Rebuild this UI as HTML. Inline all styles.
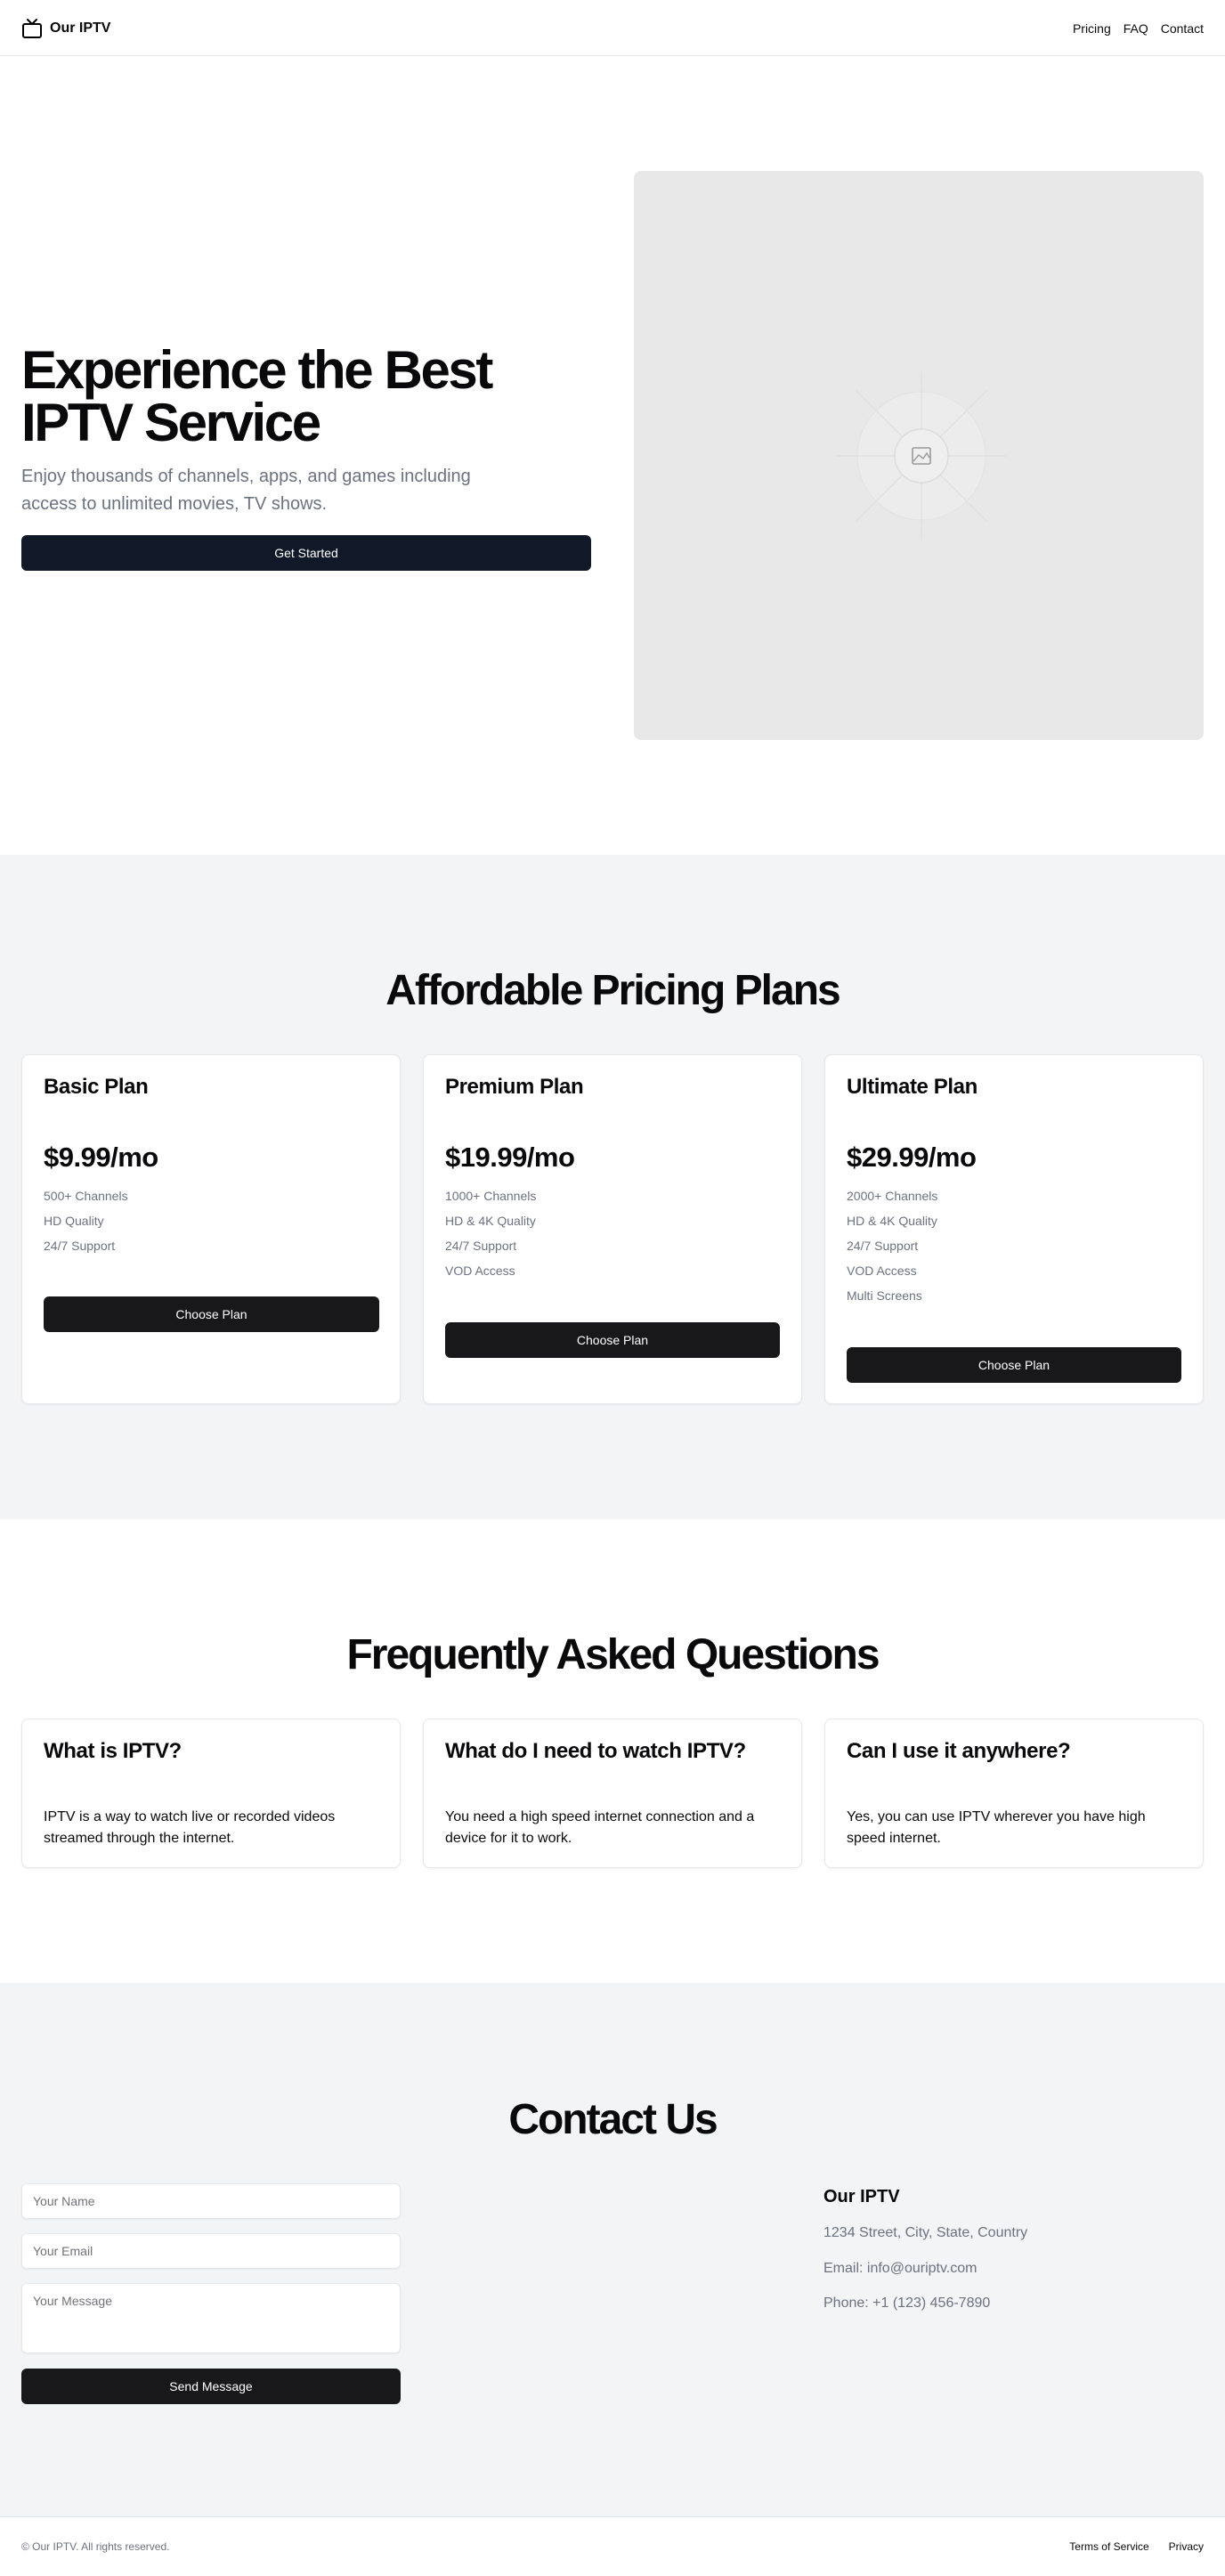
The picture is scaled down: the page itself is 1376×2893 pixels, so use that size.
<!DOCTYPE html>
<html><head><meta charset="utf-8"><style>
*{box-sizing:border-box;margin:0;padding:0}
body{width:1376px;height:2893px;font-family:"Liberation Sans",sans-serif;color:#09090b;background:#fff;position:relative;overflow:hidden}
.a{position:absolute}
header{position:absolute;left:0;top:0;width:1376px;height:63px;border-bottom:1px solid #e5e7eb}
.nav a{font-size:14px;font-weight:500;color:#09090b;text-decoration:none;margin-left:14px}
h1{font-size:60px;line-height:59px;font-weight:700;letter-spacing:-2.4px}
.h2{font-size:48px;font-weight:700;letter-spacing:-2px;width:1376px;text-align:center;left:0}
.card{background:#fff;border:1px solid #e5e7eb;border-radius:8px;box-shadow:0 1px 2px rgba(0,0,0,.06)}
.btn{background:#18181b;color:#fff;border-radius:6px;font-size:14px;font-weight:500;display:flex;align-items:center;justify-content:center}
.ct{font-size:24px;font-weight:600;letter-spacing:-.4px}
.pr{font-size:31px;font-weight:700;letter-spacing:-.5px}
.ft{font-size:14px;color:#6b7280;line-height:28px}
.inp{background:#fff;border:1px solid #e5e7eb;border-radius:6px;font-size:14px;color:#71717a;padding:11px 12px;box-shadow:0 1px 2px rgba(0,0,0,.05)}
.g{color:#6b7280;font-size:16px}
</style></head><body>
<header>
<svg class="a" style="left:24px;top:20px" width="24" height="24" viewBox="0 0 24 24" fill="none" stroke="#000" stroke-width="2" stroke-linecap="round" stroke-linejoin="round"><rect x="2" y="7" width="20" height="15" rx="2"/><polyline points="17 2 12 7 7 2"/></svg>
<div class="a" style="left:56px;top:23px;font-size:16px;font-weight:700">Our IPTV</div>
<div class="a nav" style="right:24px;top:24px"><a>Pricing</a><a>FAQ</a><a>Contact</a></div>
</header>

<h1 class="a" style="left:24px;top:386px">Experience the Best<br>IPTV Service</h1>
<div class="a" style="left:24px;top:520px;width:570px;font-size:20px;line-height:31px;color:#6b7280">Enjoy thousands of channels, apps, and games including access to unlimited movies, TV shows.</div>
<div class="a btn" style="left:24px;top:601px;width:640px;height:40px;background:#111827">Get Started</div>

<div class="a" style="left:712px;top:192px;width:640px;height:639px;background:#e8e8e8;border-radius:8px;overflow:hidden">
<svg width="640" height="639" viewBox="0 0 640 639"><g stroke="#dedede" stroke-width="1.2" fill="none">
<line x1="323" y1="225" x2="323" y2="415"/><line x1="228" y1="320" x2="418" y2="320"/>
<line x1="250" y1="247" x2="396" y2="393"/><line x1="396" y1="247" x2="250" y2="393"/></g>
<circle cx="323" cy="320" r="72" fill="#ececec" stroke="#e2e2e2"/>
<g stroke="#dedede" stroke-width="1.2"><line x1="323" y1="248" x2="323" y2="392"/><line x1="251" y1="320" x2="395" y2="320"/><line x1="272" y1="269" x2="374" y2="371"/><line x1="374" y1="269" x2="272" y2="371"/></g>
<circle cx="323" cy="320" r="30" fill="#efefef" stroke="#dcdcdc" stroke-width="1.5"/>
<rect x="313" y="311" width="20" height="18" rx="1.5" fill="none" stroke="#999" stroke-width="1.6"/>
<polyline points="314,326 320,319 325,323 329,317 332,322" fill="none" stroke="#999" stroke-width="1.4"/>
</svg></div>

<div class="a" style="left:0;top:960px;width:1376px;height:746px;background:#f3f4f6"></div>
<div class="a h2" style="top:1085px">Affordable Pricing Plans</div>

<div class="a card" style="left:24px;top:1184px;width:426px;height:393px"></div>
<div class="a ct" style="left:49px;top:1207px">Basic Plan</div>
<div class="a pr" style="left:49px;top:1282px">$9.99/mo</div>
<div class="a ft" style="left:49px;top:1329px">500+ Channels<br>HD Quality<br>24/7 Support</div>
<div class="a btn" style="left:49px;top:1456px;width:377px;height:40px">Choose Plan</div>

<div class="a card" style="left:475px;top:1184px;width:426px;height:393px"></div>
<div class="a ct" style="left:500px;top:1207px">Premium Plan</div>
<div class="a pr" style="left:500px;top:1282px">$19.99/mo</div>
<div class="a ft" style="left:500px;top:1329px">1000+ Channels<br>HD &amp; 4K Quality<br>24/7 Support<br>VOD Access</div>
<div class="a btn" style="left:500px;top:1485px;width:376px;height:40px">Choose Plan</div>

<div class="a card" style="left:926px;top:1184px;width:426px;height:393px"></div>
<div class="a ct" style="left:951px;top:1207px">Ultimate Plan</div>
<div class="a pr" style="left:951px;top:1282px">$29.99/mo</div>
<div class="a ft" style="left:951px;top:1329px">2000+ Channels<br>HD &amp; 4K Quality<br>24/7 Support<br>VOD Access<br>Multi Screens</div>
<div class="a btn" style="left:951px;top:1513px;width:376px;height:40px">Choose Plan</div>

<div class="a h2" style="top:1831px">Frequently Asked Questions</div>
<div class="a card" style="left:24px;top:1930px;width:426px;height:168px"></div>
<div class="a card" style="left:475px;top:1930px;width:426px;height:168px"></div>
<div class="a card" style="left:926px;top:1930px;width:426px;height:168px"></div>
<div class="a ct" style="left:49px;top:1953px">What is IPTV?</div>
<div class="a ct" style="left:500px;top:1953px">What do I need to watch IPTV?</div>
<div class="a ct" style="left:951px;top:1953px">Can I use it anywhere?</div>
<div class="a" style="left:49px;top:2029px;width:380px;font-size:16px;line-height:24px">IPTV is a way to watch live or recorded videos streamed through the internet.</div>
<div class="a" style="left:500px;top:2029px;width:380px;font-size:16px;line-height:24px">You need a high speed internet connection and a device for it to work.</div>
<div class="a" style="left:951px;top:2029px;width:370px;font-size:16px;line-height:24px">Yes, you can use IPTV wherever you have high speed internet.</div>

<div class="a" style="left:0;top:2227px;width:1376px;height:600px;background:#f3f4f6"></div>
<div class="a h2" style="top:2353px">Contact Us</div>
<div class="a inp" style="left:24px;top:2452px;width:426px;height:40px">Your Name</div>
<div class="a inp" style="left:24px;top:2508px;width:426px;height:40px">Your Email</div>
<div class="a inp" style="left:24px;top:2564px;width:426px;height:79px">Your Message</div>
<div class="a btn" style="left:24px;top:2660px;width:426px;height:40px">Send Message</div>
<div class="a" style="left:925px;top:2456px;font-size:20px;font-weight:600">Our IPTV</div>
<div class="a g" style="left:925px;top:2499px">1234 Street, City, State, Country</div>
<div class="a g" style="left:925px;top:2539px">Email: info@ouriptv.com</div>
<div class="a g" style="left:925px;top:2578px">Phone: +1 (123) 456-7890</div>

<div class="a" style="left:0;top:2826px;width:1376px;height:67px;border-top:1px solid #e5e7eb;background:#fff"></div>
<div class="a" style="left:24px;top:2853px;font-size:12px;color:#6b7280">© Our IPTV. All rights reserved.</div>
<div class="a" style="right:24px;top:2853px;font-size:12px"><span style="margin-right:22px">Terms of Service</span>Privacy</div>
</body></html>
